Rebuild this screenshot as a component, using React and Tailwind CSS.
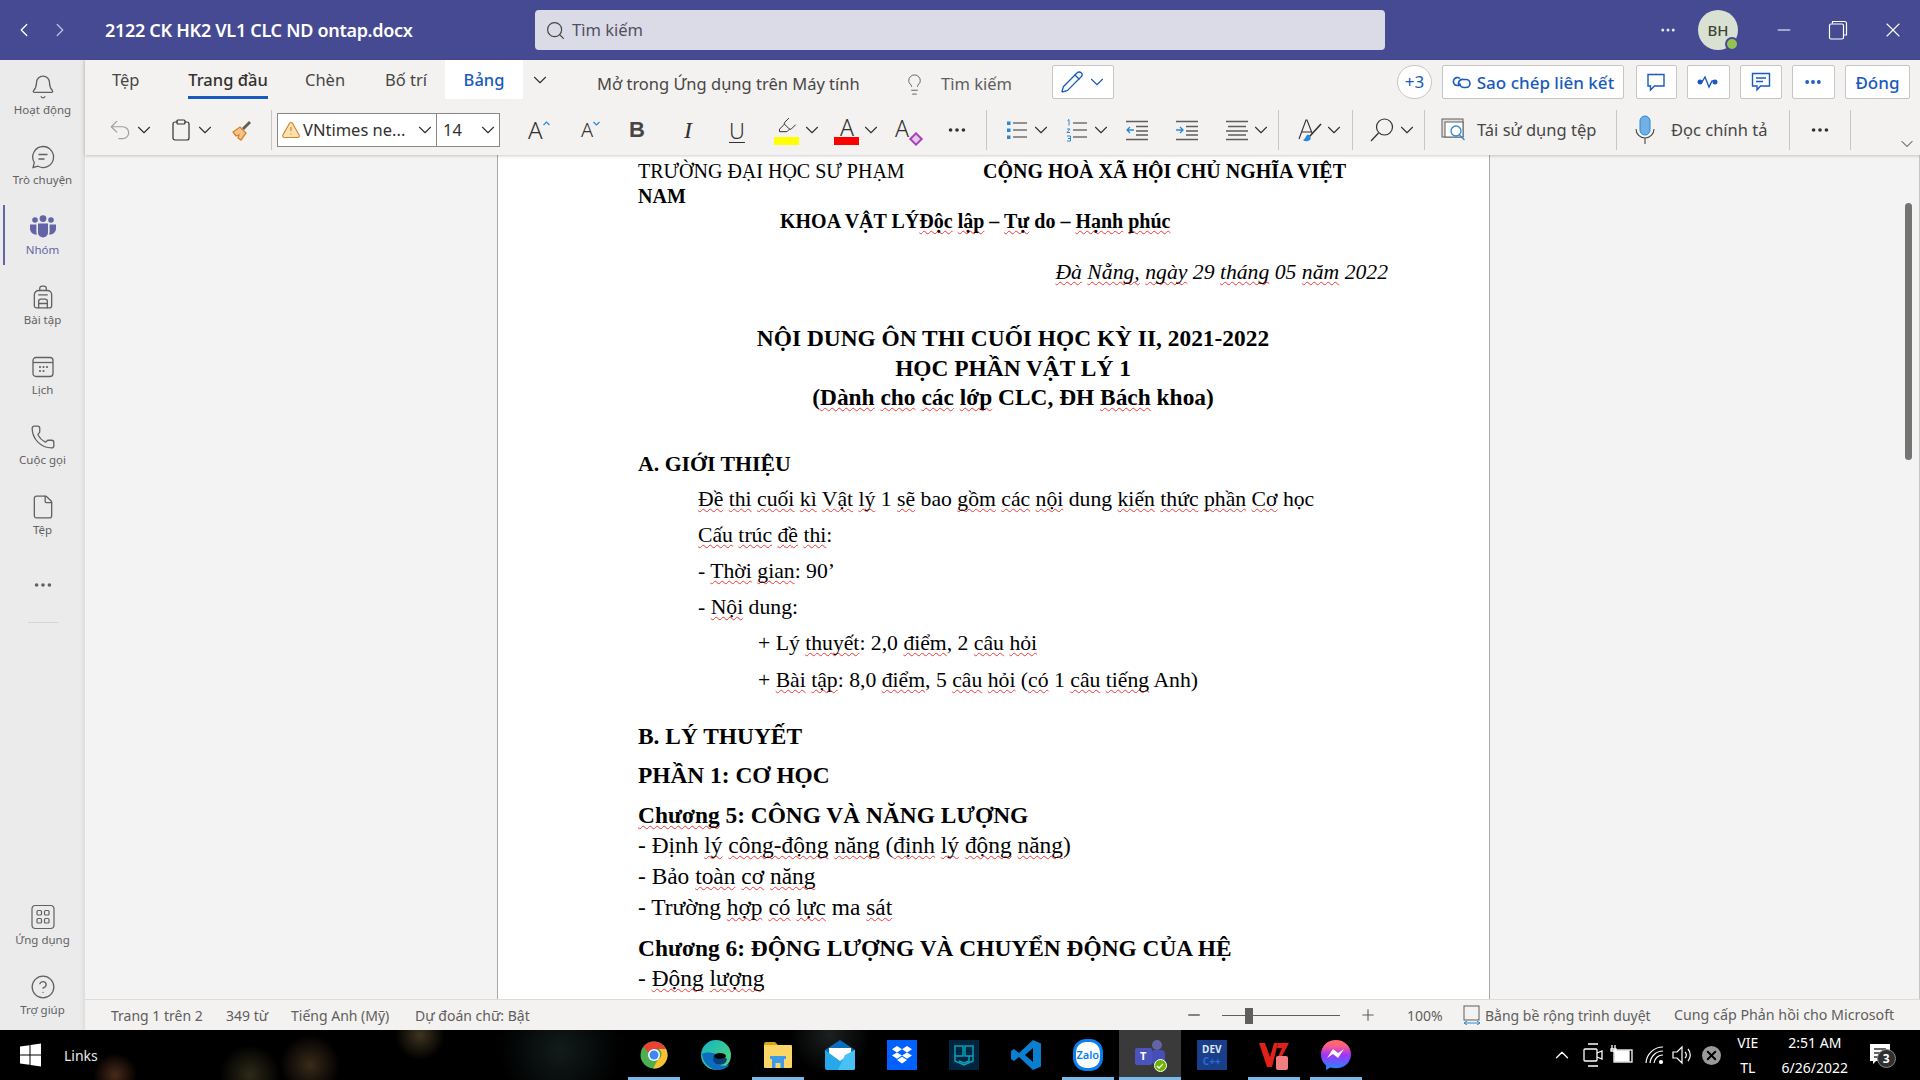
import {
  Bell, Backpack, Phone, File, Ellipsis, CircleHelp, ChevronLeft, ChevronRight, ChevronDown, ChevronUp,
  Search, Minus, Plus, X, Lightbulb, Pencil, Undo2, Clipboard, TriangleAlert, Highlighter,
} from "lucide-react";

const sans = "font-['Noto_Sans','Open_Sans',sans-serif]";

// {word} marks a word with the red spell-check squiggle
function Marked({ text }) {
  return text.split(/(\{[^}]+\})/).map((part, i) =>
    part.startsWith("{") ? (
      <span key={i} className="underline decoration-wavy decoration-[#f03a3a] decoration-1 underline-offset-2 [text-decoration-skip-ink:none]">
        {part.slice(1, -1)}
      </span>
    ) : (
      part
    )
  );
}

function Chev({ className = "text-[#323130]" }) {
  return <ChevronDown size={22} strokeWidth={1.2} className={`-mx-[3px] ${className}`} />;
}

function Sep({ className = "" }) {
  return <div className={`w-px h-[40px] bg-[#c8c6c4] ${className}`}></div>;
}

function TitleBar() {
  return (
    <div className={`h-[60px] shrink-0 bg-[#464a92] flex items-center text-white ${sans}`}>
      <ChevronLeft size={22} strokeWidth={1.5} className="ml-[13px]" />
      <ChevronRight size={22} strokeWidth={1.5} className="ml-[14px] text-[#b9bbdc]" />
      <div className="ml-[34px] w-[430px] pt-[1px] text-[18px] font-semibold whitespace-nowrap tracking-[-0.3px]">
        2122 CK HK2 VL1 CLC ND ontap.docx
      </div>
      <div className="w-[850px] h-[40px] bg-[#dbdbe7] rounded flex items-center pl-[10px] text-[#50505f] text-[16.5px]">
        <Search size={21} strokeWidth={1.4} className="text-[#484644]" />
        <span className="ml-[6px]">Tìm kiếm</span>
      </div>
      <Ellipsis size={18} strokeWidth={2} className="ml-[274px] text-[#e6e6f2]" />
      <div className="relative ml-[21px] w-[40px] h-[40px] rounded-full bg-[#d9e1d3] flex items-center justify-center text-[#3d4730] text-[15px] font-medium">
        BH
        <div className="absolute -right-[1px] -bottom-[1px] w-[14px] h-[14px] rounded-full bg-[#92c353] border-2 border-[#464a92]"></div>
      </div>
      <Minus size={20} strokeWidth={1.25} className="ml-[36px]" />
      <svg width="20" height="20" viewBox="0 0 20 20" fill="none" stroke="white" strokeWidth="1.2" className="ml-[34px]">
        <rect x="1.5" y="4" width="14" height="15" rx="1.5" />
        <path d="M4.5 3.5V1.5h12a2 2 0 0 1 2 2V15h-2.5" />
      </svg>
      <X size={24} strokeWidth={1.1} className="ml-[33px]" />
    </div>
  );
}

function RailItem({ label, active, children }) {
  return (
    <div className={`relative h-[70px] pt-[1px] flex flex-col items-center justify-center ${active ? "text-[#6264a7]" : "text-[#616161]"}`}>
      {active && <div className="absolute left-[3px] top-[5px] w-[2px] h-[60px] bg-[#6264a7]"></div>}
      <div className="h-[26px] flex items-center">{children}</div>
      <div className="text-[11.5px] leading-[16px] mt-[2px] whitespace-nowrap">{label}</div>
    </div>
  );
}

function Rail() {
  const s = { size: 26, strokeWidth: 1.2 };
  return (
    <div className={`w-[85px] shrink-0 bg-[#ebebeb] flex flex-col shadow-[inset_-6px_0_6px_-6px_rgba(0,0,0,0.12)] ${sans}`}>
      <RailItem label="Hoạt động"><Bell {...s} /></RailItem>
      <RailItem label="Trò chuyện">
        <svg width="26" height="26" viewBox="0 0 26 26" fill="none" stroke="currentColor" strokeWidth="1.3">
          <path d="M13 2.5a10.5 10.5 0 1 1-5 19.7L3 23.5l1.3-5A10.5 10.5 0 0 1 13 2.5Z" />
          <path d="M8.5 10.5h9M8.5 15h6" />
        </svg>
      </RailItem>
      <RailItem label="Nhóm" active>
        <svg width="26" height="24" viewBox="0 0 26 24" fill="currentColor">
          <circle cx="5" cy="5" r="2.8" /><circle cx="21" cy="5" r="2.8" /><circle cx="13" cy="3.6" r="3.4" />
          <path d="M0 9.5h6.4v7c0 1 .2 2 .6 3C3 20 0 17 0 13.5ZM26 9.5h-6.4v7c0 1-.2 2-.6 3 4 .5 7-2.500 7-6Z" />
          <path d="M8 8.500h10v9a5 5 0 0 1-10 0Z" />
        </svg>
      </RailItem>
      <RailItem label="Bài tập"><Backpack {...s} /></RailItem>
      <RailItem label="Lịch">
        <svg width="24" height="24" viewBox="0 0 24 24" fill="none" stroke="currentColor" strokeWidth="1.3">
          <rect x="2" y="2.500" width="20" height="19" rx="3" />
          <path d="M2 7.500h20" />
          <g fill="currentColor" stroke="none">
            <circle cx="9" cy="12" r="1.100" /><circle cx="12.500" cy="12" r="1.100" /><circle cx="16" cy="12" r="1.100" />
            <circle cx="9" cy="16" r="1.100" /><circle cx="12.500" cy="16" r="1.100" />
          </g>
        </svg>
      </RailItem>
      <RailItem label="Cuộc gọi"><Phone {...s} /></RailItem>
      <RailItem label="Tệp"><File {...s} /></RailItem>
      <div className="h-[70px] flex items-center justify-center text-[#616161]"><Ellipsis size={22} strokeWidth={2} /></div>
      <div className="w-[30px] h-px bg-[#d4d4d4] mx-auto mt-[2px]"></div>
      <div className="flex-1"></div>
      <RailItem label="Ứng dụng">
        <svg width="26" height="26" viewBox="0 0 26 26" fill="none" stroke="currentColor" strokeWidth="1.2">
          <rect x="2" y="1.500" width="22" height="23" rx="3.500" />
          <rect x="7" y="6.500" width="4.500" height="4.500" rx="1" /><rect x="14.500" y="6.500" width="4.500" height="4.500" rx="1" />
          <rect x="7" y="14.500" width="4.500" height="4.500" rx="1" /><rect x="14.500" y="14.500" width="4.500" height="4.500" rx="1" />
        </svg>
      </RailItem>
      <RailItem label="Trợ giúp"><CircleHelp {...s} /></RailItem>
    </div>
  );
}

function OutlineBtn({ className = "", children }) {
  return (
    <div className={`h-[34px] bg-white border border-[#c8c6c4] rounded-[2px] flex items-center justify-center text-[#185abd] ${className}`}>
      {children}
    </div>
  );
}

function TabsRow() {
  return (
    <div className="h-[45px] flex items-start text-[16.5px] text-[#484644]">
      <div className="ml-[27px] w-[76px] h-[39px] pt-[2px] flex items-center">Tệp</div>
      <div className="w-[80px] h-[39px] pt-[5px] flex items-center justify-center border-b-[3px] border-[#185abd] font-medium text-[#323130] whitespace-nowrap">Trang đầu</div>
      <div className="ml-[37px] w-[80px] h-[39px] pt-[2px] flex items-center">Chèn</div>
      <div className="w-[60px] h-[39px] pt-[2px] flex items-center whitespace-nowrap">Bố trí</div>
      <div className="w-[78px] h-[39px] pt-[1px] bg-white flex items-center justify-center text-[#185abd] font-medium">Bảng</div>
      <div className="ml-[9px] h-[39px] flex items-center"><Chev /></div>
      <div className="ml-[49px] mt-[5px] h-[39px] flex items-center whitespace-nowrap w-[303px]">Mở trong Ứng dụng trên Máy tính</div>
      <div className="ml-[3px] mt-[5px] h-[39px] flex items-center text-[#605e5c]">
        <Lightbulb size={23} strokeWidth={1} />
        <span className="ml-[15px] whitespace-nowrap">Tìm kiếm</span>
      </div>
      <OutlineBtn className="ml-[40px] mt-[5px] w-[62px] gap-[5px]">
        <Pencil size={24} strokeWidth={1.3} />
        <Chev className="text-[#185abd]" />
      </OutlineBtn>
      <div className="ml-[283px] mt-[5px] w-[35px] h-[34px] rounded-full bg-white border border-[#c8c6c4] flex items-center justify-center text-[#185abd] text-[17px]">+3</div>
      <OutlineBtn className="ml-[10px] mt-[5px] w-[182px] pt-[1px] gap-[5px] font-medium text-[17px]">
        <svg width="20" height="16" viewBox="0 0 20 16" fill="none" stroke="currentColor" strokeWidth="1.600">
          <path d="M8 3.500A4 4 0 1 0 5 10.500h2" />
          <path d="M7.500 11a4 4 0 0 1 4-6.500h2.500a4 4 0 0 1 0 8h-2a4 4 0 0 1-4-4" />
        </svg>
        <span className="whitespace-nowrap">Sao chép liên kết</span>
      </OutlineBtn>
      <OutlineBtn className="ml-[12px] mt-[5px] w-[41px]">
        <svg width="20" height="20" viewBox="0 0 20 20" fill="none" stroke="currentColor" strokeWidth="1.4"><path d="M2 2.500h16v11.500h-9.500l-4 4v-4H2Z" /></svg>
      </OutlineBtn>
      <OutlineBtn className="ml-[10px] mt-[5px] w-[43px]">
        <svg width="22" height="16" viewBox="0 0 22 16" fill="none" stroke="currentColor" strokeWidth="1.4">
          <path d="M2 8h3l3-5 4 10 3-6h5" />
          <circle cx="3" cy="8" r="1.800" fill="currentColor" /><circle cx="18" cy="8" r="1.800" fill="currentColor" />
        </svg>
      </OutlineBtn>
      <OutlineBtn className="ml-[10px] mt-[5px] w-[42px]">
        <svg width="20" height="20" viewBox="0 0 20 20" fill="none" stroke="currentColor" strokeWidth="1.4"><path d="M1.500 1.500h17v12.500h-9l-3.500 4v-4H1.500ZM5 6h10M5 9.500h7" /></svg>
      </OutlineBtn>
      <OutlineBtn className="ml-[10px] mt-[5px] w-[43px]"><Ellipsis size={20} strokeWidth={2.6} /></OutlineBtn>
      <OutlineBtn className="ml-[10px] mt-[5px] w-[65px] pt-[1px] font-medium text-[17px]">Đóng</OutlineBtn>
    </div>
  );
}

function ToolsRow() {
  return (
    <div className="h-[50px] flex items-center text-[#323130] relative">
      <Undo2 size={26} strokeWidth={1.1} className="ml-[22px] -mr-[1px] text-[#a19f9d]" />
      <div className="ml-[4px] flex"><Chev /></div>
      <Clipboard size={24} strokeWidth={1.2} className="ml-[17px]" />
      <div className="ml-[4px] flex"><Chev /></div>
      <svg width="24" height="24" viewBox="0 0 24 24" className="ml-[17px]" fill="none">
        <path d="M3 14l7-5 6 6-5 7-3-2 1-3-3 1Z" fill="#f7c38a" stroke="#d9822b" strokeWidth="1.300" />
        <path d="M12 10l7-7 2 2-7 7Z" fill="#605e5c" />
      </svg>
      <Sep className="ml-[17px]" />
      <div className="ml-[5px] w-[160px] h-[34px] bg-white border border-[#8a8886] flex items-center text-[16.5px] pl-[3px]">
        <TriangleAlert size={20} strokeWidth={1.4} className="text-[#d9822b] fill-[#fde3b4]" />
        <span className="ml-[2px] whitespace-nowrap">VNtimes ne...</span>
        <div className="ml-auto mr-[3px] flex"><Chev /></div>
      </div>
      <div className="w-[63px] h-[34px] bg-white border border-l-0 border-[#8a8886] flex items-center text-[16.5px] pl-[6px]">
        14
        <div className="ml-auto mr-[3px] flex"><Chev /></div>
      </div>
      <div className="ml-[28px] w-[22px] text-[24px] font-light leading-none flex items-start">
        A
        <svg width="7" height="5" viewBox="0 0 7 5" fill="none" stroke="#2b88d8" strokeWidth="1.200" className="mt-[3px] shrink-0"><path d="M.5 4l3-3 3 3" /></svg>
      </div>
      <div className="ml-[31px] w-[22px] text-[20px] font-light leading-none flex items-start">
        A
        <svg width="7" height="5" viewBox="0 0 7 5" fill="none" stroke="#2b88d8" strokeWidth="1.200" className="mt-[1px] shrink-0"><path d="M.5 1l3 3 3-3" /></svg>
      </div>
      <div className="ml-[26px] w-[16px] text-[22px] font-bold text-[#484644] font-['Liberation_Sans',sans-serif] leading-none">B</div>
      <div className="ml-[39px] w-[10px] text-[24px] italic font-['Liberation_Serif',serif] leading-none">I</div>
      <div className="ml-[35px] w-[18px] text-[22px] font-light leading-none underline underline-offset-3 decoration-1">U</div>
      <div className="ml-[27px] w-[26px] h-[30px] relative flex justify-center">
        <Highlighter size={20} strokeWidth={1.2} />
        <div className="absolute left-0 bottom-0 w-[25px] h-[8px] bg-[#ffff00]"></div>
      </div>
      <div className="ml-[4px] flex"><Chev /></div>
      <div className="ml-[14px] w-[26px] h-[30px] relative flex justify-center text-[23px] font-light leading-[24px]">
        A
        <div className="absolute left-0 bottom-0 w-[25px] h-[8px] bg-[#ff0000]"></div>
      </div>
      <div className="ml-[3px] flex"><Chev /></div>
      <div className="ml-[16px] w-[26px] h-[30px] relative text-[23px] font-light leading-[26px]">
        A
        <div className="absolute right-0 bottom-[1px] w-[10px] h-[10px] border-2 border-[#a646b5] bg-[#e8c8ee] rotate-45"></div>
      </div>
      <Ellipsis size={22} strokeWidth={2} className="ml-[25px]" />
      <Sep className="ml-[18px]" />
      <svg width="24" height="24" viewBox="0 0 24 24" className="ml-[18px]" stroke="#323130" strokeWidth="1.200" fill="none">
        <path d="M8 5h14M8 12h14M8 19h14" />
        <path d="M2 3.500h3.500V7H2ZM2 10.500h3.500V14H2ZM2 17.500h3.500V21H2Z" fill="#2b88d8" stroke="none" />
      </svg>
      <div className="ml-[4px] flex"><Chev /></div>
      <svg width="24" height="24" viewBox="0 0 24 24" className="ml-[16px]" stroke="#323130" strokeWidth="1.200" fill="none">
        <path d="M8 5h14M8 12h14M8 19h14" />
        <path d="M2.500 2.500l1.500-1v6M2 11h3l-3 3.500h3M2 18h3.500v5H2M3 20.500h2" stroke="#2b88d8" strokeWidth="1" />
      </svg>
      <div className="ml-[4px] flex"><Chev /></div>
      <svg width="24" height="24" viewBox="0 0 24 24" className="ml-[16px]" stroke="#605e5c" strokeWidth="1.300" fill="none">
        <path d="M1 3.500h22M11 8.500h12M11 13h12M11 17h12M1 21.500h22" />
        <path d="M9 12H2M5 9l-3 3 3 3" stroke="#2b88d8" />
      </svg>
      <svg width="24" height="24" viewBox="0 0 24 24" className="ml-[26px]" stroke="#605e5c" strokeWidth="1.300" fill="none">
        <path d="M1 3.500h22M11 8.500h12M11 13h12M11 17h12M1 21.500h22" />
        <path d="M1 12h7M5 9l3 3-3 3" stroke="#2b88d8" />
      </svg>
      <svg width="24" height="24" viewBox="0 0 24 24" className="ml-[26px]" stroke="#605e5c" strokeWidth="1.300" fill="none">
        <path d="M1 3.500h22M3 8.500h18M1 13h22M3 17h18M1 21.500h22" />
      </svg>
      <div className="ml-[4px] flex"><Chev /></div>
      <Sep className="ml-[9px]" />
      <svg width="28" height="26" viewBox="0 0 28 26" className="ml-[18px]" fill="none" stroke="#323130" strokeWidth="1.100">
        <path d="M2 22L9 3h1l5 13M5 15h9" />
        <path d="M13 22c-2 2-5 2-6 1 2-1 2-4 4-5l2 1Z" fill="#2b88d8" stroke="#2b88d8" />
        <path d="M13 19L24 7" strokeWidth="1.600" />
      </svg>
      <div className="ml-[1px] flex"><Chev /></div>
      <Sep className="ml-[10px]" />
      <svg width="26" height="26" viewBox="0 0 26 26" className="ml-[16px]" fill="none" stroke="#323130" strokeWidth="1.200">
        <circle cx="15.500" cy="10" r="8" /><path d="M9.500 16L2 24" />
      </svg>
      <div className="ml-[4px] flex"><Chev /></div>
      <Sep className="ml-[9px]" />
      <svg width="26" height="24" viewBox="0 0 26 24" className="ml-[16px]" fill="none">
        <rect x="1" y="1" width="21" height="18" fill="#e1dfdd" stroke="#605e5c" />
        <rect x="4" y="4" width="18" height="15" fill="#fff" stroke="#605e5c" />
        <circle cx="15" cy="13" r="5" stroke="#2b88d8" strokeWidth="1.300" />
        <path d="M18.500 17l5 5" stroke="#2b88d8" strokeWidth="1.300" />
      </svg>
      <span className="ml-[10px] text-[16.5px] whitespace-nowrap text-[#484644] w-[118px]">Tái sử dụng tệp</span>
      <Sep className="ml-[21px]" />
      <svg width="24" height="30" viewBox="0 0 24 30" className="ml-[16px]" fill="none">
        <rect x="7" y="1" width="10" height="19" rx="5" fill="#71afe5" stroke="#2b88d8" />
        <path d="M3 14a9 9 0 0 0 18 0M12 23v6" stroke="#484644" strokeWidth="1.100" />
      </svg>
      <span className="ml-[14px] text-[16.5px] whitespace-nowrap text-[#484644] w-[96px]">Đọc chính tả</span>
      <Sep className="ml-[22px]" />
      <Ellipsis size={22} strokeWidth={2} className="ml-[19px]" />
      <Sep className="ml-[19px]" />
      <ChevronDown size={20} strokeWidth={1.2} className="ml-[46px] mt-[28px]" />
    </div>
  );
}

function Page() {
  return (
    <div className="w-[993px] h-full bg-white border-x border-[#a8a8a8] pl-[140px] pt-[4px] font-['Liberation_Serif',serif] text-[20px] text-black overflow-hidden">
      <div className="w-[750px]">
        <p className="leading-[25px]">
          <span className="inline-block w-[345px] whitespace-nowrap">TRƯỜNG ĐẠI HỌC SƯ PHẠM</span>
          <b>CỘNG HOÀ XÃ HỘI CHỦ NGHĨA VIỆT NAM</b>
        </p>
        <p className="leading-[25px] pl-[142px] font-bold"><Marked text="KHOA VẬT LÝ{Độc} {lập} – {Tự} do – {Hạnh} {phúc}" /></p>
        <p className="mt-[23px] leading-[30px] text-right italic text-[21.7px]"><Marked text="{Đà} {Nẵng,} {ngày} 29 {tháng} 05 {năm} 2022" /></p>
        <div className="mt-[37px] text-center font-bold text-[23.4px] leading-[29.5px]">
          <p>NỘI DUNG ÔN THI CUỐI HỌC KỲ II, 2021-2022</p>
          <p>HỌC PHẦN VẬT LÝ 1</p>
          <p><Marked text="({Dành} {cho} {các} {lớp} CLC, ĐH {Bách} khoa)" /></p>
        </div>
        <p className="mt-[36px] leading-[30px] font-bold text-[21.8px]">A. GIỚI THIỆU</p>
        <div className="mt-[2px] leading-[36.2px] pl-[60px] text-[21.7px]">
          <p><Marked text="{Đề} {thi} {cuối} {kì} {Vật} {lý} 1 {sẽ} bao {gồm} {các} {nội} dung {kiến} {thức} {phần} {Cơ} học" /></p>
          <p><Marked text="{Cấu} {trúc} {đề} {thi}:" /></p>
          <p><Marked text="- {Thời} {gian}: 90’" /></p>
          <p><Marked text="- {Nội} dung:" /></p>
          <p className="pl-[60px]"><Marked text="+ Lý {thuyết}: 2,0 {điểm}, 2 {câu} {hỏi}" /></p>
          <p className="pl-[60px]"><Marked text="+ {Bài} {tập}: 8,0 {điểm}, 5 {câu} {hỏi} ({có} 1 {câu} {tiếng} Anh)" /></p>
        </div>
        <div className="text-[23.4px]">
          <p className="mt-[23px] leading-[30px] font-bold">B. LÝ THUYẾT</p>
          <p className="mt-[9px] leading-[30px] font-bold">PHẦN 1: CƠ HỌC</p>
          <p className="mt-[10px] leading-[30px] font-bold"><Marked text="{Chương} 5: CÔNG VÀ NĂNG LƯỢNG" /></p>
          <div className="leading-[31px]">
            <p><Marked text="- Định {lý} {công-động} {năng} ({định} {lý} {động} {năng})" /></p>
            <p><Marked text="- Bảo {toàn} {cơ} {năng}" /></p>
            <p><Marked text="- Trường {hợp} {có} {lực} ma {sát}" /></p>
          </div>
          <p className="mt-[10px] leading-[30px] font-bold">Chương 6: ĐỘNG LƯỢNG VÀ CHUYỂN ĐỘNG CỦA HỆ</p>
          <p className="leading-[31px]"><Marked text="- {Động} {lượng}" /></p>
        </div>
      </div>
    </div>
  );
}

function StatusBar() {
  return (
    <div className={`h-[31px] shrink-0 bg-[#f3f2f1] border-t border-[#dedcda] flex items-center text-[14px] text-[#605e5c] whitespace-nowrap ${sans}`}>
      <span className="ml-[26px] w-[115px]">Trang 1 trên 2</span>
      <span className="w-[65px]">349 từ</span>
      <span className="w-[124px]">Tiếng Anh (Mỹ)</span>
      <span className="w-[640px]">Dự đoán chữ: Bật</span>
      <Minus size={18} strokeWidth={1.8} className="ml-[130px]" />
      <div className="ml-[19px] w-[118px] h-px bg-[#605e5c] relative">
        <div className="absolute left-[23px] -top-[7px] w-[8px] h-[16px] bg-[#605e5c]"></div>
      </div>
      <Plus size={18} strokeWidth={1.5} className="ml-[19px]" />
      <span className="ml-[30px] w-[56px]">100%</span>
      <svg width="18" height="20" viewBox="0 0 18 20" fill="none" className="mr-[4px]">
        <rect x="1" y="1" width="15" height="14" stroke="#605e5c" />
        <path d="M1 18h16M4 16l-3 2 3 2M14 16l3 2-3 2" stroke="#2b88d8" />
      </svg>
      <span className="w-[189px]">Bằng bề rộng trình duyệt</span>
      <span className="text-[14.25px]">Cung cấp Phản hồi cho Microsoft</span>
    </div>
  );
}

function TaskIcon({ under, active, children }) {
  return (
    <div className={`relative w-[62px] h-[50px] flex items-center justify-center ${active ? "bg-[#3a3a3a]" : ""}`}>
      {children}
      {under && <div className={`absolute bottom-0 h-[3px] bg-[#76b9ed] ${active ? "left-0 right-0" : "left-[5px] right-[5px]"}`}></div>}
    </div>
  );
}

function Taskbar() {
  return (
    <div className={`h-[50px] shrink-0 flex items-center text-white whitespace-nowrap bg-black bg-[radial-gradient(circle_at_115px_45px,#4a2a1a_0,transparent_22px),radial-gradient(circle_at_310px_35px,#3a2a1a_0,transparent_30px),radial-gradient(circle_at_420px_5px,#3e3420_0,transparent_25px),radial-gradient(circle_at_250px_45px,#2e2a18_0,transparent_30px),radial-gradient(circle_at_560px_20px,#121b1b_0,transparent_60px),radial-gradient(circle_at_830px_5px,#1c2020_0,transparent_40px)] ${sans}`}>
      <svg width="21" height="24" viewBox="0 0 21 24" className="ml-[20px]" fill="white">
        <path d="M0 3.500l9.500-1.300v9.300H0ZM10.500 2l10.500-1.500v11H10.500ZM0 12.500h9.500v9.300L0 20.500ZM10.500 12.500H21v11l-10.500-1.500Z" />
      </svg>
      <span className="ml-[23px] text-[14px] text-[#e8e8e8]">Links</span>
      <div className="ml-[525px] flex">
        <TaskIcon under>
          <svg width="28" height="28" viewBox="0 0 28 28">
            <circle cx="14" cy="14" r="13.500" fill="#4caf50" />
            <path d="M14 .5a13.500 13.500 0 0 1 12 7.500H14a6 6 0 0 0-5.500 3.500L3.200 6A13.500 13.500 0 0 1 14 .5Z" fill="#ea4335" />
            <path d="M26 8a13.500 13.500 0 0 1-13 19.500l5-9a6 6 0 0 0 1-10.500Z" fill="#fbc02d" />
            <circle cx="14" cy="14" r="6" fill="#fff" /><circle cx="14" cy="14" r="4.500" fill="#4285f4" />
          </svg>
        </TaskIcon>
        <TaskIcon>
          <svg width="30" height="30" viewBox="0 0 30 30">
            <defs>
              <linearGradient id="edgeA" x1="0" y1="0" x2="1" y2="1"><stop offset="0" stopColor="#0fb5c9" /><stop offset="1" stopColor="#5bd66e" /></linearGradient>
            </defs>
            <circle cx="15" cy="15" r="15" fill="url(#edgeA)" />
            <path d="M1 14C2 24 10 30 17 30c5 0 9-2 12-6-5 3-11 2-14-1-3-3-2-7 0-9-5-2-11-2-14 0Z" fill="#0c6cc0" />
            <path d="M15 14c-3 2-4 6-1 9 3 3 9 2 11-1 2-3 0-5-2-4-4 2-6 0-8-4Z" fill="#0a3f80" />
            <ellipse cx="19" cy="16" rx="6" ry="3" fill="#000" />
          </svg>
        </TaskIcon>
        <TaskIcon under>
          <svg width="30" height="28" viewBox="0 0 30 28">
            <path d="M1 3a2 2 0 0 1 2-2h9l3 3h-14Z" fill="#d9a217" />
            <path d="M1 4h27a1 1 0 0 1 1 1v21a1 1 0 0 1-1 1H2a1 1 0 0 1-1-1Z" fill="#fbd566" />
            <path d="M9 27V18h12v9h-3.500v-5h-5v5Z" fill="#3d9ce8" />
            <rect x="7" y="15" width="16" height="3" fill="#3d9ce8" />
          </svg>
        </TaskIcon>
        <TaskIcon>
          <svg width="30" height="30" viewBox="0 0 30 30">
            <path d="M0 10L15 0l15 10v4H0Z" fill="#0a6ebd" />
            <path d="M4 8h22v8l-11 6-11-6Z" fill="#fff" />
            <path d="M0 10v18a2 2 0 0 0 2 2h26a2 2 0 0 0 2-2V10L15 21Z" fill="#27a8ea" />
            <path d="M30 10v18a2 2 0 0 1-2 2H13l7-15Z" fill="#48c2f5" />
          </svg>
        </TaskIcon>
        <TaskIcon>
          <div className="w-[30px] h-[30px] bg-[#0061ff] flex items-center justify-center">
            <svg width="20" height="18" viewBox="0 0 20 18" fill="white">
              <path d="M5 0L0 3.200l5 3.200 5-3.200ZM15 0l-5 3.200 5 3.200 5-3.200ZM0 9.600l5 3.200 5-3.200-5-3.200ZM15 6.400l-5 3.200 5 3.200 5-3.200ZM5 14l5 3.500 5-3.500-5-3.200Z" />
            </svg>
          </div>
        </TaskIcon>
        <TaskIcon>
          <div className="w-[30px] h-[30px] bg-[#02243f] flex items-center justify-center">
            <svg width="22" height="24" viewBox="0 0 22 24" fill="none" stroke="#0aa0b8" strokeWidth="1.500">
              <path d="M2 3h8v10H2ZM12 3h8v10h-8ZM2 13v5l9 4 9-4v-5M6 18l5 2 5-2V13" />
            </svg>
          </div>
        </TaskIcon>
        <TaskIcon under={false}>
          <svg width="30" height="30" viewBox="0 0 30 30">
            <path d="M22 0l8 3.500v23L22 30 8 17l-5 4-3-2v-8l3-2 5 4ZM22 8l-8 7 8 7Z" fill="#0a7fd0" />
          </svg>
        </TaskIcon>
        <TaskIcon under>
          <div className="w-[30px] h-[32px] rounded-[13px] bg-white flex items-center justify-center border-[3px] border-[#0a80f0] text-[#0a80f0] text-[11px] font-semibold">Zalo</div>
        </TaskIcon>
        <TaskIcon under active>
          <div className="relative w-[30px] h-[30px]">
            <div className="absolute right-[3px] top-0 w-[10px] h-[10px] rounded-full bg-[#6264a7]"></div>
            <div className="absolute right-0 top-[10px] w-[14px] h-[14px] rounded-[4px] bg-[#464eb8]"></div>
            <div className="absolute left-0 top-[8px] w-[17px] h-[17px] rounded-[2px] bg-[#4b53bc] flex items-center justify-center text-white text-[11px] font-bold">T</div>
            <div className="absolute -right-[2px] -bottom-[2px] w-[13px] h-[13px] rounded-full bg-[#6bb700] border border-white flex items-center justify-center">
              <svg width="8" height="8" viewBox="0 0 8 8" fill="none" stroke="white" strokeWidth="1.300"><path d="M1 4l2 2 4-4" /></svg>
            </div>
          </div>
        </TaskIcon>
        <TaskIcon>
          <div className="w-[30px] h-[30px] bg-[#1a3f8a] flex flex-col items-center justify-center text-[10px] font-bold leading-[12px]">
            <span className="text-[#dfe6f5]">DEV</span>
            <span className="text-[#2a69d8]">C++</span>
          </div>
        </TaskIcon>
        <TaskIcon under>
          <svg width="30" height="30" viewBox="0 0 30 30">
            <path d="M0 3h6l5 14L15 3h4l-6 24H8Z" fill="#e0201b" />
            <path d="M19 3h11l-7 13-4 1 4-9h-5Z" fill="#e0201b" />
            <rect x="17" y="16" width="12" height="14" rx="2" fill="#f08080" />
          </svg>
        </TaskIcon>
        <TaskIcon under>
          <svg width="30" height="30" viewBox="0 0 30 30">
            <defs>
              <linearGradient id="msgA" x1="0.500" y1="1" x2="0.500" y2="0"><stop offset="0" stopColor="#1d8cf8" /><stop offset="0.500" stopColor="#a033ff" /><stop offset="0.800" stopColor="#ff5c87" /><stop offset="1" stopColor="#ff7061" /></linearGradient>
            </defs>
            <path d="M15 0C6.500 0 0 6 0 14.500c0 4.500 1.800 8.300 5 11V30l4.300-2.500c1.800.5 3.700.8 5.700.8 8.500 0 15-6 15-14S23.500 0 15 0Z" fill="url(#msgA)" />
            <path d="M6 18l6-9 5 4 6-4-6 9-5-4Z" fill="#fff" />
          </svg>
        </TaskIcon>
      </div>
      <ChevronUp size={22} strokeWidth={1.4} className="ml-[184px]" />
      <svg width="20" height="24" viewBox="0 0 20 24" className="ml-[10px]" fill="none" stroke="white" strokeWidth="1.300">
        <path d="M5 1h10M5 23h10" /><rect x="1" y="6" width="13" height="12" rx="1" /><path d="M14 10l5-2v8l-5-2" />
      </svg>
      <svg width="24" height="20" viewBox="0 0 24 20" className="ml-[7px]" fill="none" stroke="white" strokeWidth="1.300">
        <rect x="4" y="5" width="18" height="12" /><rect x="5" y="6" width="14" height="10" fill="white" /><path d="M2 0v4M5 0v4M1 4h5v2H1Z" />
      </svg>
      <svg width="22" height="20" viewBox="0 0 22 20" className="ml-[11px]" fill="none" stroke="white" strokeWidth="1.200">
        <path d="M1 18A17 17 0 0 1 18 2M5 18A13 13 0 0 1 18 6M9 18a9 9 0 0 1 9-8" />
        <circle cx="16" cy="17" r="1.500" fill="white" />
      </svg>
      <svg width="22" height="22" viewBox="0 0 22 22" className="ml-[4px]" fill="none" stroke="white" strokeWidth="1.200">
        <path d="M2 8h4l5-5v16l-5-5H2ZM14 8a4 4 0 0 1 0 6M17 5a9 9 0 0 1 0 12" />
      </svg>
      <div className="ml-[9px] w-[19px] h-[19px] rounded-full bg-[#9a9a9a] flex items-center justify-center text-black">
        <X size={15} strokeWidth={3} />
      </div>
      <div className="ml-[9px] w-[36px] flex flex-col items-center text-[14px] leading-[25px]"><span>VIE</span><span>TL</span></div>
      <div className="ml-[9px] w-[80px] flex flex-col items-center text-[14px] leading-[25px]"><span>2:51 AM</span><span>6/26/2022</span></div>
      <div className="relative ml-[14px] w-[24px] h-[22px]">
        <svg width="20" height="20" viewBox="0 0 20 20" className="ml-[1px]">
          <path d="M0 0h20v17H6l-3 3v-3H0Z" fill="white" />
          <path d="M4 5h12M4 9h12M4 13h12" stroke="#333" strokeWidth="1.300" />
        </svg>
        <div className="absolute -right-[3px] top-[5px] w-[19px] h-[19px] rounded-full bg-[#303030] border border-[#888] flex items-center justify-center text-[12px] font-bold">3</div>
      </div>
    </div>
  );
}

export default function App() {
  return (
    <div className="w-[1920px] h-[1080px] flex flex-col overflow-hidden bg-[#f3f3f3]">
      <TitleBar />
      <div className="flex-1 flex min-h-0">
        <Rail />
        <div className="flex-1 flex flex-col min-w-0">
          <div className={`relative z-10 h-[95px] shrink-0 bg-[#f3f2f1] shadow-[0_1px_3px_rgba(0,0,0,0.2)] ${sans}`}>
            <TabsRow />
            <ToolsRow />
          </div>
          <div className="flex-1 flex min-h-0 bg-[#f3f3f3] border-r border-[#c4c4c4]">
            <div className="w-[412px] shrink-0"></div>
            <Page />
            <div className="ml-[415px] mt-[48px] w-[7px] h-[257px] rounded-full bg-[#757472]"></div>
          </div>
          <StatusBar />
        </div>
      </div>
      <Taskbar />
    </div>
  );
}
